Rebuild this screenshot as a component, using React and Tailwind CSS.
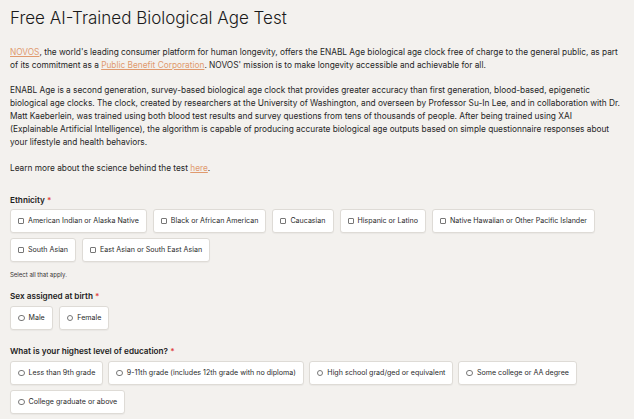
import React from "react";

const font = { fontFamily: "Inter, 'Noto Sans', sans-serif" };

function Box({ label, type }) {
  return (
    <div className="flex h-[24px] items-center gap-[4px] rounded-[3px] border border-[#dedbd6] bg-white px-[7px] text-[7.1px] text-[#2a2a2a] shadow-[0_1px_1px_rgba(0,0,0,0.04)]">
      {type === "check" ? (
        <span className="inline-block h-[6px] w-[6px] rounded-[1px] border border-[#777] bg-white" />
      ) : (
        <span className="inline-block h-[6.5px] w-[6.5px] rounded-full border border-[#777] bg-white" />
      )}
      <span className="whitespace-nowrap">{label}</span>
    </div>
  );
}

function Label({ children }) {
  return (
    <div className="text-[8.2px] font-semibold leading-[12px] text-[#1c1c1c]">
      {children} <span className="text-[#e0433c]">*</span>
    </div>
  );
}

function Link({ children }) {
  return <a className="text-[#e09a6e] underline">{children}</a>;
}

export default function App() {
  return (
    <div style={font} className="min-h-[419px] w-[634px] overflow-hidden bg-[#f3f1ee] pl-[10px] pr-[8px] text-[#262626]">
      <h1 className="pt-[8px] text-[17px] font-light leading-[21px] text-[#1a1a1a]">
        Free AI-Trained Biological Age Test
      </h1>
      <p className="mt-[17px] text-[8.3px] leading-[13px]">
        <Link>NOVOS</Link>, the world's leading consumer platform for human longevity, offers the ENABL Age biological age clock free of charge to the general public, as part of its commitment as a <Link>Public Benefit Corporation</Link>. NOVOS' mission is to make longevity accessible and achievable for all.
      </p>
      <p className="mt-[11.5px] text-[8.3px] leading-[13px]">
        ENABL Age is a second generation, survey-based biological age clock that provides greater accuracy than first generation, blood-based, epigenetic biological age clocks. The clock, created by researchers at the University of Washington, and overseen by Professor Su-In Lee, and in collaboration with Dr. Matt Kaeberlein, was trained using both blood test results and survey questions from tens of thousands of people. After being trained using XAI<br />
        (Explainable Artificial Intelligence), the algorithm is capable of producing accurate biological age outputs based on simple questionnaire responses about<br />
        your lifestyle and health behaviors.
      </p>
      <p className="mt-[13px] text-[8.3px] leading-[13px]">
        Learn more about the science behind the test <Link>here</Link>.
      </p>

      <div className="mt-[19px]">
        <Label>Ethnicity</Label>
        <div className="mt-[3.5px] flex flex-wrap gap-x-[6px] gap-y-[5px]">
          <Box type="check" label="American Indian or Alaska Native" />
          <Box type="check" label="Black or African American" />
          <Box type="check" label="Caucasian" />
          <Box type="check" label="Hispanic or Latino" />
          <Box type="check" label="Native Hawaiian or Other Pacific Islander" />
          <Box type="check" label="South Asian" />
          <Box type="check" label="East Asian or South East Asian" />
        </div>
        <div className="mt-[8px] text-[6px] leading-[10px] text-[#333]">Select all that apply.</div>
      </div>

      <div className="mt-[10px]">
        <Label>Sex assigned at birth</Label>
        <div className="mt-[4px] flex flex-wrap gap-x-[6px] gap-y-[5px]">
          <Box type="radio" label="Male" />
          <Box type="radio" label="Female" />
        </div>
      </div>

      <div className="mt-[15px]">
        <Label>What is your highest level of education?</Label>
        <div className="mt-[4px] flex flex-wrap gap-x-[5px] gap-y-[5px]">
          <Box type="radio" label="Less than 9th grade" />
          <Box type="radio" label="9-11th grade (includes 12th grade with no diploma)" />
          <Box type="radio" label="High school grad/ged or equivalent" />
          <Box type="radio" label="Some college or AA degree" />
          <Box type="radio" label="College graduate or above" />
        </div>
      </div>
    </div>
  );
}
